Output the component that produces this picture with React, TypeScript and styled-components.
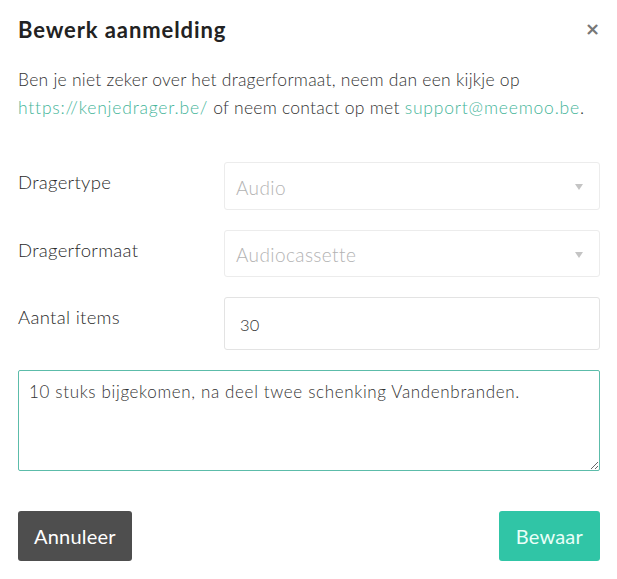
import React from "react";
import styled, { createGlobalStyle } from "styled-components";

const Global = createGlobalStyle`
  html, body { margin: 0; padding: 0; background: #fff; }
  body { font-family: Lato, "Noto Sans", sans-serif; color: #333; }
  * { box-sizing: border-box; }
`;

const Dialog = styled.div`
  width: 617px;
  padding: 14px 17px 18px 18px;
  display: flex;
  flex-direction: column;
`;

const Header = styled.div`
  display: flex;
  justify-content: space-between;
  align-items: center;
  height: 30px;
`;

const Title = styled.h2`
  margin: 0;
  font-size: 22px;
  font-weight: 700;
  color: #222;
  letter-spacing: 0.9px;
`;

const Close = styled.button`
  border: 0;
  background: none;
  padding: 0;
  font-size: 18px;
  font-weight: 700;
  color: #777;
  font-family: "DejaVu Sans", sans-serif;
  line-height: 1;
  cursor: pointer;
`;

const Intro = styled.p`
  margin: 22px 0 0 0;
  font-size: 17.5px;
  font-weight: 300;
  letter-spacing: 0.25px;
  line-height: 28px;
  color: #333;
`;

const Link = styled.a`
  color: #46b59a;
  text-decoration: none;
  letter-spacing: 0.8px;
`;

const Form = styled.div`
  margin-top: 40px;
  display: grid;
  grid-template-columns: 206px 1fr;
  row-gap: 20px;
  align-items: start;
`;

const Label = styled.label`
  font-size: 18.5px;
  font-weight: 300;
  letter-spacing: 0.3px;
  color: #2a2a2a;
  padding-top: 9px;
`;

const Field = styled.div<{ $h: number; $muted?: boolean }>`
  height: ${(p) => p.$h}px;
  border: 1px solid ${(p) => (p.$muted ? "#ececec" : "#e3e3e3")};
  border-radius: 3px;
  display: flex;
  align-items: center;
  justify-content: space-between;
  padding: 2px 16px 0 ${(p) => (p.$muted ? 11 : 15)}px;
  font-size: ${(p) => (p.$muted ? 19 : 16.5)}px;
  letter-spacing: ${(p) => (p.$muted ? 0.4 : 0.3)}px;
  color: ${(p) => (p.$muted ? "#b3b3b3" : "#333")};
  font-weight: 300;
`;

const Caret = styled.span`
  width: 0;
  height: 0;
  border-left: 4px solid transparent;
  border-right: 4px solid transparent;
  border-top: 6px solid #c4c4c4;
`;

const Note = styled.textarea`
  margin-top: 20px;
  width: 100%;
  height: 101px;
  border: 1px solid #5cbcaa;
  border-radius: 2px;
  padding: 10px 10px;
  font-family: Lato, "Noto Sans", sans-serif;
  font-size: 17px;
  font-weight: 300;
  letter-spacing: 0.65px;
  color: #333;
  resize: vertical;
  outline: none;
  display: block;
  caret-color: #222;
`;

const Footer = styled.div`
  margin-top: 40px;
  display: flex;
  justify-content: space-between;
`;

const Button = styled.button<{ $primary?: boolean }>`
  height: 50px;
  padding: 0 ${(p) => (p.$primary ? 17 : 16)}px;
  border: 0;
  border-radius: 3px;
  font-family: Lato, "Noto Sans", sans-serif;
  font-size: 20px;
  letter-spacing: 0.2px;
  font-weight: 400;
  background: ${(p) => (p.$primary ? "#30c5a6" : "#4e4e4e")};
  color: ${(p) => (p.$primary ? "#e9fff8" : "#fff")};
  cursor: pointer;
`;

const noteText = "10 stuks bijgekomen, na deel twee schenking Vandenbranden.";

export default function App() {
  const ref = React.useRef<HTMLTextAreaElement>(null);
  React.useEffect(() => {
    const el = ref.current;
    if (el) {
      el.focus();
      el.setSelectionRange(noteText.length, noteText.length);
    }
  }, []);
  return (
    <>
      <Global />
      <Dialog>
        <Header>
          <Title>Bewerk aanmelding</Title>
          <Close aria-label="Sluiten">×</Close>
        </Header>
        <Intro>
          Ben je niet zeker over het dragerformaat, neem dan een kijkje op{" "}
          <Link href="#">https://kenjedrager.be/</Link> of neem contact op met{" "}
          <Link href="#">support@meemoo.be</Link>.
        </Intro>
        <Form>
          <Label>Dragertype</Label>
          <Field $h={48} $muted>
            <span>Audio</span>
            <Caret />
          </Field>
          <Label>Dragerformaat</Label>
          <Field $h={47} $muted>
            <span>Audiocassette</span>
            <Caret />
          </Field>
          <Label>Aantal items</Label>
          <Field $h={53}>
            <span>30</span>
          </Field>
        </Form>
        <Note ref={ref} defaultValue={noteText} />
        <Footer>
          <Button>Annuleer</Button>
          <Button $primary>Bewaar</Button>
        </Footer>
      </Dialog>
    </>
  );
}
